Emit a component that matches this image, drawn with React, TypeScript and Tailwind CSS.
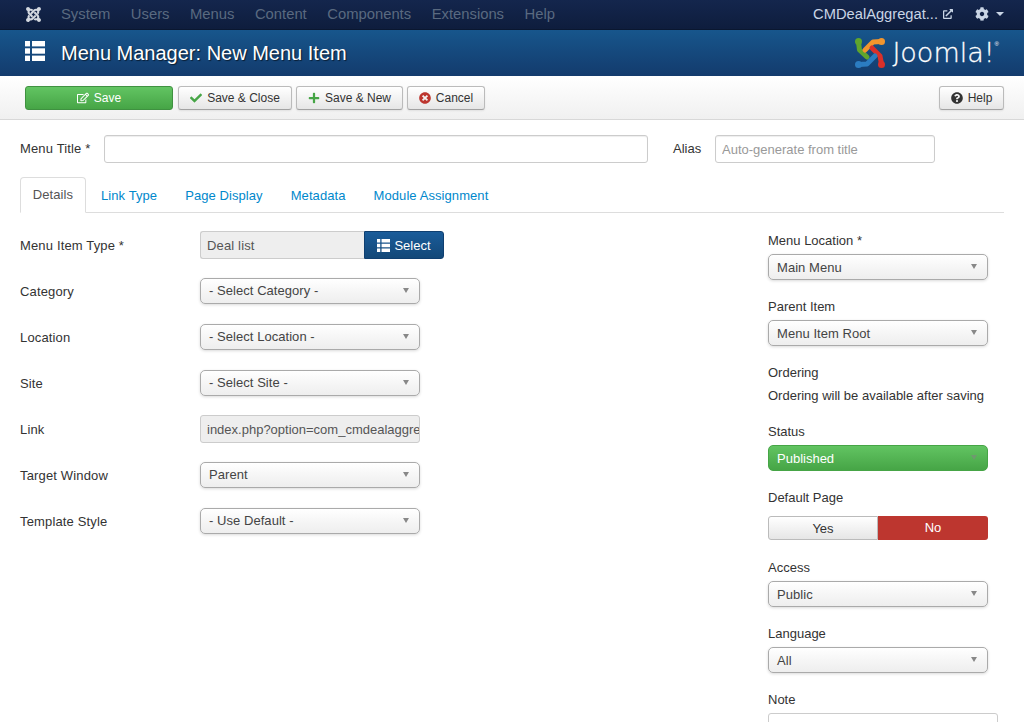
import React from 'react';
import { FaJoomla, FaCheck, FaPlus, FaTimesCircle, FaQuestionCircle, FaCog, FaRegEdit, FaExternalLinkAlt } from 'react-icons/fa';

const navItems = ['System', 'Users', 'Menus', 'Content', 'Components', 'Extensions', 'Help'];
const tabs = ['Link Type', 'Page Display', 'Metadata', 'Module Assignment'];

const JoomlaMark = () => (
  <svg width="30" height="30" viewBox="0 0 30 30" fill="none" strokeWidth="5" strokeLinecap="round" strokeLinejoin="round">
    <path d="M3.5 4 L4.5 12 L12 19" stroke="#5fa52d" />
    <path d="M26 3.5 L18 4 L10 12" stroke="#f2952d" />
    <path d="M26.5 26 L25 18 L17 10" stroke="#d9302a" />
    <path d="M4 26.5 L12 26 L20 18" stroke="#2b7cc1" />
    <circle cx="3.5" cy="3.5" r="3.5" fill="#5fa52d" />
    <circle cx="26.5" cy="3.5" r="3.5" fill="#f2952d" />
    <circle cx="26.5" cy="26.5" r="3.5" fill="#d9302a" />
    <circle cx="3.5" cy="26.5" r="3.5" fill="#2b7cc1" />
  </svg>
);

// three rows: small square + long bar
const ListIcon = ({ className = '' }: { className?: string }) => (
  <svg className={className} viewBox="0 0 20 20" fill="currentColor">
    <rect x="0" y="0" width="5" height="5.4" />
    <rect x="7" y="0" width="13" height="5.4" />
    <rect x="0" y="7.3" width="5" height="5.4" />
    <rect x="7" y="7.3" width="13" height="5.4" />
    <rect x="0" y="14.6" width="5" height="5.4" />
    <rect x="7" y="14.6" width="13" height="5.4" />
  </svg>
);

const Select = ({ value, side = false }: { value: string; side?: boolean }) => (
  <div className="w-[220px] h-[26px] rounded-[5px] border border-[#aaa] bg-gradient-to-b from-white via-[#f6f6f6] to-[#eeeeee] shadow-[0_1px_3px_rgba(0,0,0,0.15)] flex items-center justify-between pl-2 pr-[10px] text-[13px] tracking-[0.05px] text-[#444]">
    <span className={side ? 'pt-[2px]' : ''}>{value}</span>
    <span className="-mt-[2px] w-0 h-0 border-x-[3.5px] border-x-transparent border-t-[5px] border-t-[#888]" />
  </div>
);

const ToolButton = ({ children, className = '' }: { children: React.ReactNode; className?: string }) => (
  <button className={`h-[24px] flex items-center justify-center gap-[5px] rounded-[3px] border border-[#bbb] border-b-[#a2a2a2] bg-gradient-to-b from-white to-[#e6e6e6] text-[12px] text-[#333] shadow-[0_1px_2px_rgba(0,0,0,0.08)] ${className}`}>
    {children}
  </button>
);

const FormRow = ({ label, children }: { label: string; children: React.ReactNode }) => (
  <div className="flex h-[28px] mb-[18px]">
    <label className="w-[180px] pt-[7px] text-[13px] tracking-[0.15px] leading-[16px] text-[#333]">{label}</label>
    {children}
  </div>
);

const SideLabel = ({ children, className = '' }: { children: React.ReactNode; className?: string }) => (
  <div className={`h-[18px] leading-[18px] text-[13px] text-[#333] ${className}`}>{children}</div>
);

export default function App() {
  return (
    <div className="h-[722px] overflow-hidden bg-white font-['Liberation_Sans',Arial,sans-serif]">
      {/* Top nav */}
      <nav className="h-[30px] bg-gradient-to-b from-[#14264d] to-[#0e1d3d] border-b border-[#0a1730] flex items-center pl-[25px] pr-[20px]">
        <FaJoomla className="w-[17px] h-[17px] text-[#d4d9e0]" />
        <ul className="flex ml-[19px] gap-[20.5px] text-[14.8px] text-[#5a6a80]">
          {navItems.map((item) => (
            <li key={item}>{item}</li>
          ))}
        </ul>
        <div className="ml-auto flex items-center text-[14.7px] text-[#c9d5e5]">
          <span>CMDealAggregat...</span>
          <FaExternalLinkAlt className="w-[10px] h-[10px] ml-[5px]" />
          <FaCog className="w-[14px] h-[14px] ml-[22px]" />
          <span className="ml-[7px] w-0 h-0 border-x-[4px] border-x-transparent border-t-[4px] border-t-[#c9d5e5]" />
        </div>
      </nav>

      {/* Title bar */}
      <header className="h-[46px] bg-gradient-to-b from-[#17568c] to-[#133b6d] flex items-center pl-[25px] pr-[25px]">
        <ListIcon className="w-[20px] h-[20px] -mt-[5px] text-white" />
        <h1 className="ml-[16px] text-[20px] text-white [text-shadow:1px_1px_1px_rgba(0,0,0,0.6)]">Menu Manager: New Menu Item</h1>
        <div className="ml-auto flex items-center">
          <JoomlaMark />
          <span className="ml-[7px] font-['DejaVu_Sans',sans-serif] font-extralight text-[27px] leading-[30px] text-white [-webkit-text-stroke:0.3px_white]">Joomla!</span>
          <span className="self-start mt-[2px] text-[6px] leading-[8px] text-white">®</span>
        </div>
      </header>

      {/* Toolbar */}
      <div className="h-[44px] bg-gradient-to-b from-white to-[#f0f0f0] border-b border-[#d8d8d8] flex items-center pl-[25px] pr-[20px] gap-[4px]">
        <button className="w-[148px] h-[24px] flex items-center justify-center gap-[5px] rounded-[3px] border border-[#3f9140] bg-gradient-to-b from-[#62c462] to-[#46a546] text-[12px] text-white">
          <FaRegEdit className="w-[12px] h-[12px]" />
          Save
        </button>
        <ToolButton className="w-[114px] ml-[1px]">
          <FaCheck className="w-[12px] h-[12px] text-[#46a546]" />
          Save &amp; Close
        </ToolButton>
        <ToolButton className="w-[107px]">
          <FaPlus className="w-[12px] h-[12px] text-[#46a546]" />
          Save &amp; New
        </ToolButton>
        <ToolButton className="w-[78px]">
          <FaTimesCircle className="w-[12px] h-[12px] text-[#bd362f]" />
          Cancel
        </ToolButton>
        <ToolButton className="w-[65px] ml-auto">
          <FaQuestionCircle className="w-[12px] h-[12px] text-[#333]" />
          Help
        </ToolButton>
      </div>

      <main className="px-[20px]">
        {/* Title and alias */}
        <div className="flex items-center mt-[15px] h-[28px]">
          <label className="w-[84px] text-[13px] tracking-[0.15px] text-[#333]">Menu Title *</label>
          <input className="w-[544px] h-[28px] rounded-[3px] border border-[#ccc] bg-white shadow-[inset_0_1px_1px_rgba(0,0,0,0.07)]" />
          <label className="ml-[25px] w-[42px] text-[13px] text-[#333]">Alias</label>
          <input
            className="w-[220px] h-[28px] px-[6px] rounded-[3px] border border-[#ccc] bg-white text-[13px] placeholder:text-[#999] shadow-[inset_0_1px_1px_rgba(0,0,0,0.07)]"
            placeholder="Auto-generate from title"
          />
        </div>

        {/* Tabs */}
        <div className="flex mt-[14px] h-[36px] border-b border-[#ddd] text-[13px] tracking-[0.08px]">
          <div className="w-[66px] h-[36px] rounded-t-[4px] border border-[#ddd] border-b-white bg-white flex items-center justify-center text-[#555]">Details</div>
          <div className="flex ml-[1px]">
            {tabs.map((tab) => (
              <div key={tab} className="px-[14px] leading-[36px] pt-[1px] text-[#0088cc]">{tab}</div>
            ))}
          </div>
        </div>

        <div className="flex mt-[18px]">
          {/* Left column */}
          <div className="w-[748px]">
            <FormRow label="Menu Item Type *">
              <div className="w-[164px] h-[28px] rounded-l-[3px] border border-[#ccc] border-r-0 bg-[#eeeeee] pl-[6px] leading-[28px] text-[13px] tracking-[0.15px] text-[#555]">Deal list</div>
              <button className="w-[80px] h-[28px] rounded-r-[3px] border border-[#0f3f70] bg-gradient-to-b from-[#1a5c9a] to-[#134878] flex items-center justify-center gap-[4px] pt-[1px] text-[13px] text-white">
                <ListIcon className="w-[13px] h-[13px]" />
                Select
              </button>
            </FormRow>
            <FormRow label="Category"><div className="mt-[1px]"><Select value="- Select Category -" /></div></FormRow>
            <FormRow label="Location"><div className="mt-[1px]"><Select value="- Select Location -" /></div></FormRow>
            <FormRow label="Site"><div className="mt-[1px]"><Select value="- Select Site -" /></div></FormRow>
            <FormRow label="Link">
              <input
                readOnly
                value="index.php?option=com_cmdealaggregator"
                className="w-[220px] h-[28px] rounded-[3px] border border-[#ccc] bg-[#eeeeee] pl-[6px] text-[13px] text-[#555]"
              />
            </FormRow>
            <FormRow label="Target Window"><div className="mt-[1px]"><Select value="Parent" /></div></FormRow>
            <FormRow label="Template Style"><div className="mt-[1px]"><Select value="- Use Default -" /></div></FormRow>
          </div>

          {/* Right column */}
          <aside className="w-[236px] mt-[1px]">
            <SideLabel className="mb-[4px]">Menu Location *</SideLabel>
            <Select side value="Main Menu" />
            <SideLabel className="mt-[18px] mb-[4px]">Parent Item</SideLabel>
            <Select side value="Menu Item Root" />
            <SideLabel className="mt-[18px]">Ordering</SideLabel>
            <SideLabel className="mt-[5px]">Ordering will be available after saving</SideLabel>
            <SideLabel className="mt-[18px] mb-[4px]">Status</SideLabel>
            <div className="w-[220px] h-[26px] rounded-[5px] border border-[#46a546] bg-gradient-to-b from-[#62c462] to-[#46a546] flex items-center justify-between pl-2 pr-[10px] text-[13px] text-white">
              <span className="pt-[2px]">Published</span>
              <span className="-mt-[2px] w-0 h-0 border-x-[3.5px] border-x-transparent border-t-[5px] border-t-[#6f9a6f]" />
            </div>
            <SideLabel className="mt-[18px] mb-[9px]">Default Page</SideLabel>
            <div className="flex w-[220px] h-[24px] text-[13px]">
              <div className="w-[110px] rounded-l-[3px] border border-[#bbb] bg-gradient-to-b from-white to-[#e6e6e6] text-center leading-[23px] text-[#333]">Yes</div>
              <div className="w-[110px] rounded-r-[3px] bg-[#bd362f] text-center leading-[24px] text-white">No</div>
            </div>
            <SideLabel className="mt-[19px] mb-[4px]">Access</SideLabel>
            <Select side value="Public" />
            <SideLabel className="mt-[18px] mb-[4px]">Language</SideLabel>
            <Select side value="All" />
            <SideLabel className="mt-[18px] mb-[4px]">Note</SideLabel>
            <input className="w-[230px] h-[28px] rounded-[3px] border border-[#ccc] bg-white" />
          </aside>
        </div>
      </main>
    </div>
  );
}
